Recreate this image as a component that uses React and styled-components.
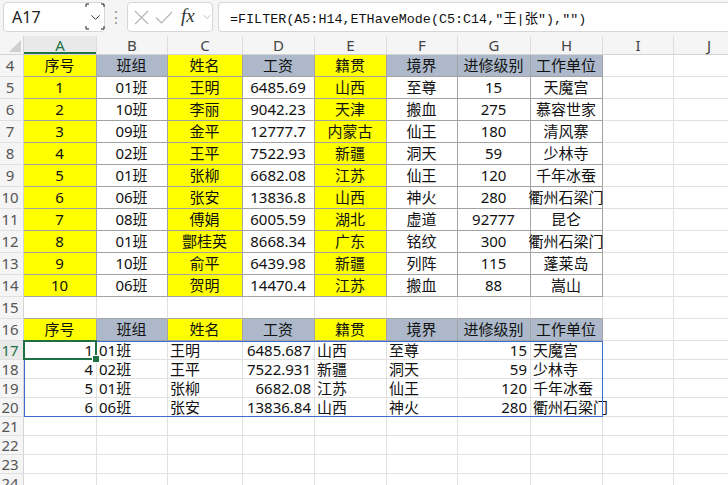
import React from "react";
import styled, { createGlobalStyle } from "styled-components";
import { ChevronDown } from "lucide-react";

const GlobalStyle = createGlobalStyle`
	html, body {
		margin: 0;
		padding: 0;
		background: #ffffff;
		overflow: hidden;
	}
	body {
		font-family: "Noto Sans", "Noto Sans CJK SC", sans-serif;
	}
`;

const colWidths = [24, 73, 71, 75, 72, 72, 71, 73, 72, 71, 71];
const letters = ["A", "B", "C", "D", "E", "F", "G", "H", "I", "J"];
const heads = ["序号", "班组", "姓名", "工资", "籍贯", "境界", "进修级别", "工作单位"];
const headFill = ["yellow", "blue", "yellow", "blue", "yellow", "blue", "blue", "blue"];

const source = [
	["1", "01班", "王明", "6485.69", "山西", "至尊", "15", "天魔宫"],
	["2", "10班", "李丽", "9042.23", "天津", "搬血", "275", "慕容世家"],
	["3", "09班", "金平", "12777.7", "内蒙古", "仙王", "180", "清风寨"],
	["4", "02班", "王平", "7522.93", "新疆", "洞天", "59", "少林寺"],
	["5", "01班", "张柳", "6682.08", "江苏", "仙王", "120", "千年冰蚕"],
	["6", "06班", "张安", "13836.8", "山西", "神火", "280", "衢州石梁门"],
	["7", "08班", "傅娟", "6005.59", "湖北", "虚道", "92777", "昆仑"],
	["8", "01班", "酆桂英", "8668.34", "广东", "铭纹", "300", "衢州石梁门"],
	["9", "10班", "俞平", "6439.98", "新疆", "列阵", "115", "蓬莱岛"],
	["10", "06班", "贺明", "14470.4", "江苏", "搬血", "88", "嵩山"],
];

const result = [
	["1", "01班", "王明", "6485.687", "山西", "至尊", "15", "天魔宫"],
	["4", "02班", "王平", "7522.931", "新疆", "洞天", "59", "少林寺"],
	["5", "01班", "张柳", "6682.08", "江苏", "仙王", "120", "千年冰蚕"],
	["6", "06班", "张安", "13836.84", "山西", "神火", "280", "衢州石梁门"],
];

const fills = { yellow: "#ffff00", blue: "#adb9ca", none: "transparent" };
const numericCols = [0, 3, 6];

const CancelIcon = () => (
	<svg width="15" height="15" viewBox="0 0 15 15">
		<path d="M1 1 L14 14 M14 1 L1 14" stroke="#b3b3b3" strokeWidth="1.1" fill="none" />
	</svg>
);

const EnterIcon = () => (
	<svg width="18" height="13" viewBox="0 0 18 13">
		<path d="M1 6.5 L6.5 12 L17 1" stroke="#b3b3b3" strokeWidth="1.1" fill="none" />
	</svg>
);

const App = () => {
	const rows = [];

	// row 4 - 14 : source table
	const tableRows = [heads, ...source];
	tableRows.forEach((r, i) => {
		rows.push({
			no: 4 + i,
			tall: true,
			cells: letters.map((_, c) => {
				if (c > 7) return { text: "" };
				let fill = "none";
				if (i === 0) fill = headFill[c];
				else if (c === 0 || c === 2 || c === 4) fill = "yellow";
				return { text: r[c], fill, align: "center", line: "dark" };
			}),
		});
	});

	// row 15 : empty, dark bottom under A-H
	rows.push({
		no: 15,
		tall: true,
		cells: letters.map((_, c) => ({ text: "", bottom: c <= 7 ? "dark" : undefined })),
	});

	// row 16 : result header
	rows.push({
		no: 16,
		tall: true,
		cells: letters.map((_, c) =>
			c > 7 ? { text: "" } : { text: heads[c], fill: headFill[c], align: "center", line: "dark" }
		),
	});

	// row 17 - 20 : spill result
	result.forEach((r, i) => {
		rows.push({
			no: 17 + i,
			active: i === 0,
			cells: letters.map((_, c) => {
				if (c > 7) return { text: "" };
				return { text: r[c], align: numericCols.includes(c) ? "right" : "left" };
			}),
		});
	});

	for (let n = 21; n <= 24; n++) {
		rows.push({ no: n, cells: letters.map(() => ({ text: "" })) });
	}

	const spillLeft = colWidths[0];
	const spillWidth = colWidths.slice(1, 9).reduce((a, b) => a + b, 0);
	const spillTop = 19 + 13 * 22;

	return (
		<>
			<GlobalStyle />
			<Toolbar>
				<NameBox>
					<span>A17</span>
					<NameDrop>
						<ChevronDown size={15} strokeWidth={1.6} color="#333" />
						<svg width="20" height="27" viewBox="0 0 20 27">
							<path d="M1 4 V1 H4 M16 1 H19 V4 M19 23 V26 H16 M4 26 H1 V23" fill="none" stroke="#222" strokeWidth="1" />
						</svg>
					</NameDrop>
				</NameBox>
				<Dots>⋮</Dots>
				<FxBox>
					<CancelIcon />
					<EnterIcon />
					<FxLabel>fx</FxLabel>
					<ChevronDown size={12} strokeWidth={1.3} color="#9a9a9a" />
				</FxBox>
				<FormulaBox>=FILTER(A5:H14,ETHaveMode(C5:C14,"王|张"),"")</FormulaBox>
			</Toolbar>

			<Sheet $cols={colWidths}>
				<Corner />
				{letters.map((l, i) => (
					<ColHead key={l} $active={i === 0}>{l}</ColHead>
				))}
				{rows.map((row) => (
					<React.Fragment key={row.no}>
						<RowHead $tall={row.tall} $active={row.active}>{row.no}</RowHead>
						{row.cells.map((cell, c) => (
							<Cell
								key={c}
								$tall={row.tall}
								$fill={fills[cell.fill || "none"]}
								$align={cell.align || "left"}
								$line={cell.line}
								$bottom={cell.bottom}
							>
								{cell.text}
							</Cell>
						))}
					</React.Fragment>
				))}
				<SpillFrame style={{ left: spillLeft, top: spillTop, width: spillWidth, height: 4 * 19 }} />
				<ActiveCell style={{ left: spillLeft - 1, top: spillTop - 1, width: colWidths[1] + 1, height: 19 + 1 }}>
					<FillHandle />
				</ActiveCell>
			</Sheet>
		</>
	);
};

export default App;

const Toolbar = styled.div`
	height: 36px;
	box-sizing: border-box;
	padding: 2px 0 4px 3px;
	display: flex;
	align-items: stretch;
	background: #f5f5f5;
`;

const Box = styled.div`
	box-sizing: border-box;
	background: #ffffff;
	border: 1px solid #d6d6d6;
	border-radius: 4px;
	display: flex;
	align-items: center;
	flex-shrink: 0;

	svg {
		flex-shrink: 0;
	}
`;

const NameBox = styled(Box)`
	width: 102px;
	padding-left: 8px;
	justify-content: space-between;
	font-size: 16px;
	color: #222;
	font-family: "Noto Sans", sans-serif;
`;

const NameDrop = styled.div`
	position: relative;
	width: 20px;
	height: 27px;
	display: flex;
	align-items: center;
	justify-content: center;
	margin-right: -1px;

	svg:last-child {
		position: absolute;
		left: 0;
		top: -1px;
	}
`;

const Dots = styled.div`
	width: 22px;
	display: flex;
	align-items: center;
	justify-content: center;
	color: #9a9a9a;
	font-size: 16px;
`;

const FxBox = styled(Box)`
	width: 86px;
	padding: 0 3px 0 6px;
	gap: 6px;
`;

const FxLabel = styled.span`
	font-family: "Liberation Serif", serif;
	font-style: italic;
	font-size: 19px;
	color: #333;
	margin-left: 2px;
	margin-top: -3px;
`;

const FormulaBox = styled(Box)`
	flex: 1;
	flex-shrink: 1;
	margin-left: 5px;
	border-right: none;
	border-radius: 4px 0 0 4px;
	padding-left: 11px;
	font-family: "Liberation Mono", "Noto Sans CJK SC", monospace;
	font-size: 13.4px;
	color: #111;
	white-space: nowrap;
`;

const Sheet = styled.div`
	position: relative;
	display: grid;
	grid-template-columns: ${(p) => p.$cols.map((w) => `${w}px`).join(" ")};
	width: 728px;
	overflow: hidden;
	background: #ffffff;
	font-size: 15px;
	color: #111;
`;

const Corner = styled.div`
	height: 19px;
	box-sizing: border-box;
	background: #f5f5f5;
	border-right: 1px solid #d4d4d4;
	border-bottom: 1px solid #d4d4d4;
	position: relative;

	&::after {
		content: "";
		position: absolute;
		right: 2px;
		bottom: 2px;
		border-left: 12px solid transparent;
		border-bottom: 12px solid #d0d0d0;
	}
`;

const ColHead = styled.div`
	height: 19px;
	box-sizing: border-box;
	display: flex;
	align-items: center;
	justify-content: center;
	background: ${(p) => (p.$active ? "#e9e9e9" : "#f5f5f5")};
	color: ${(p) => (p.$active ? "#1e7145" : "#444")};
	border-right: 1px solid #dcdcdc;
	border-bottom: 1px solid #d4d4d4;
	box-shadow: ${(p) => (p.$active ? "inset 0 -2px 0 #1e7145" : "none")};
	font-family: "Noto Sans", sans-serif;
	font-size: 15px;
	line-height: 18px;
`;

const RowHead = styled.div`
	height: ${(p) => (p.$tall ? 22 : 19)}px;
	box-sizing: border-box;
	display: flex;
	align-items: center;
	justify-content: center;
	padding-right: 3px;
	background: ${(p) => (p.$active ? "#e9e9e9" : "#f5f5f5")};
	color: ${(p) => (p.$active ? "#1e7145" : "#555")};
	border-right: 1px solid #d4d4d4;
	border-bottom: 1px solid #e0e0e0;
	font-family: "Noto Sans", sans-serif;
	font-size: 15px;
	line-height: 1;
`;

const Cell = styled.div`
	height: ${(p) => (p.$tall ? 22 : 19)}px;
	box-sizing: border-box;
	display: flex;
	align-items: center;
	justify-content: ${(p) =>
		p.$align === "center" ? "center" : p.$align === "right" ? "flex-end" : "flex-start"};
	padding: 0 3px 0 2px;
	background: ${(p) => p.$fill};
	border-right: 1px solid ${(p) => (p.$line === "dark" ? "#a3a3a3" : "#e1e1e1")};
	border-bottom: 1px solid
		${(p) => (p.$line === "dark" || p.$bottom === "dark" ? "#a3a3a3" : "#e1e1e1")};
	white-space: nowrap;
	line-height: 1;
	font-family: "Noto Sans", "Noto Sans CJK SC", sans-serif;
	font-size: 15px;
`;

const SpillFrame = styled.div`
	position: absolute;
	box-sizing: border-box;
	border: 1px solid #3a6fcf;
	pointer-events: none;
`;

const ActiveCell = styled.div`
	position: absolute;
	box-sizing: border-box;
	border: 2px solid #1e7145;
	pointer-events: none;
`;

const FillHandle = styled.div`
	position: absolute;
	right: -5px;
	bottom: -5px;
	width: 6px;
	height: 6px;
	background: #1e7145;
	border: 1px solid #ffffff;
`;
